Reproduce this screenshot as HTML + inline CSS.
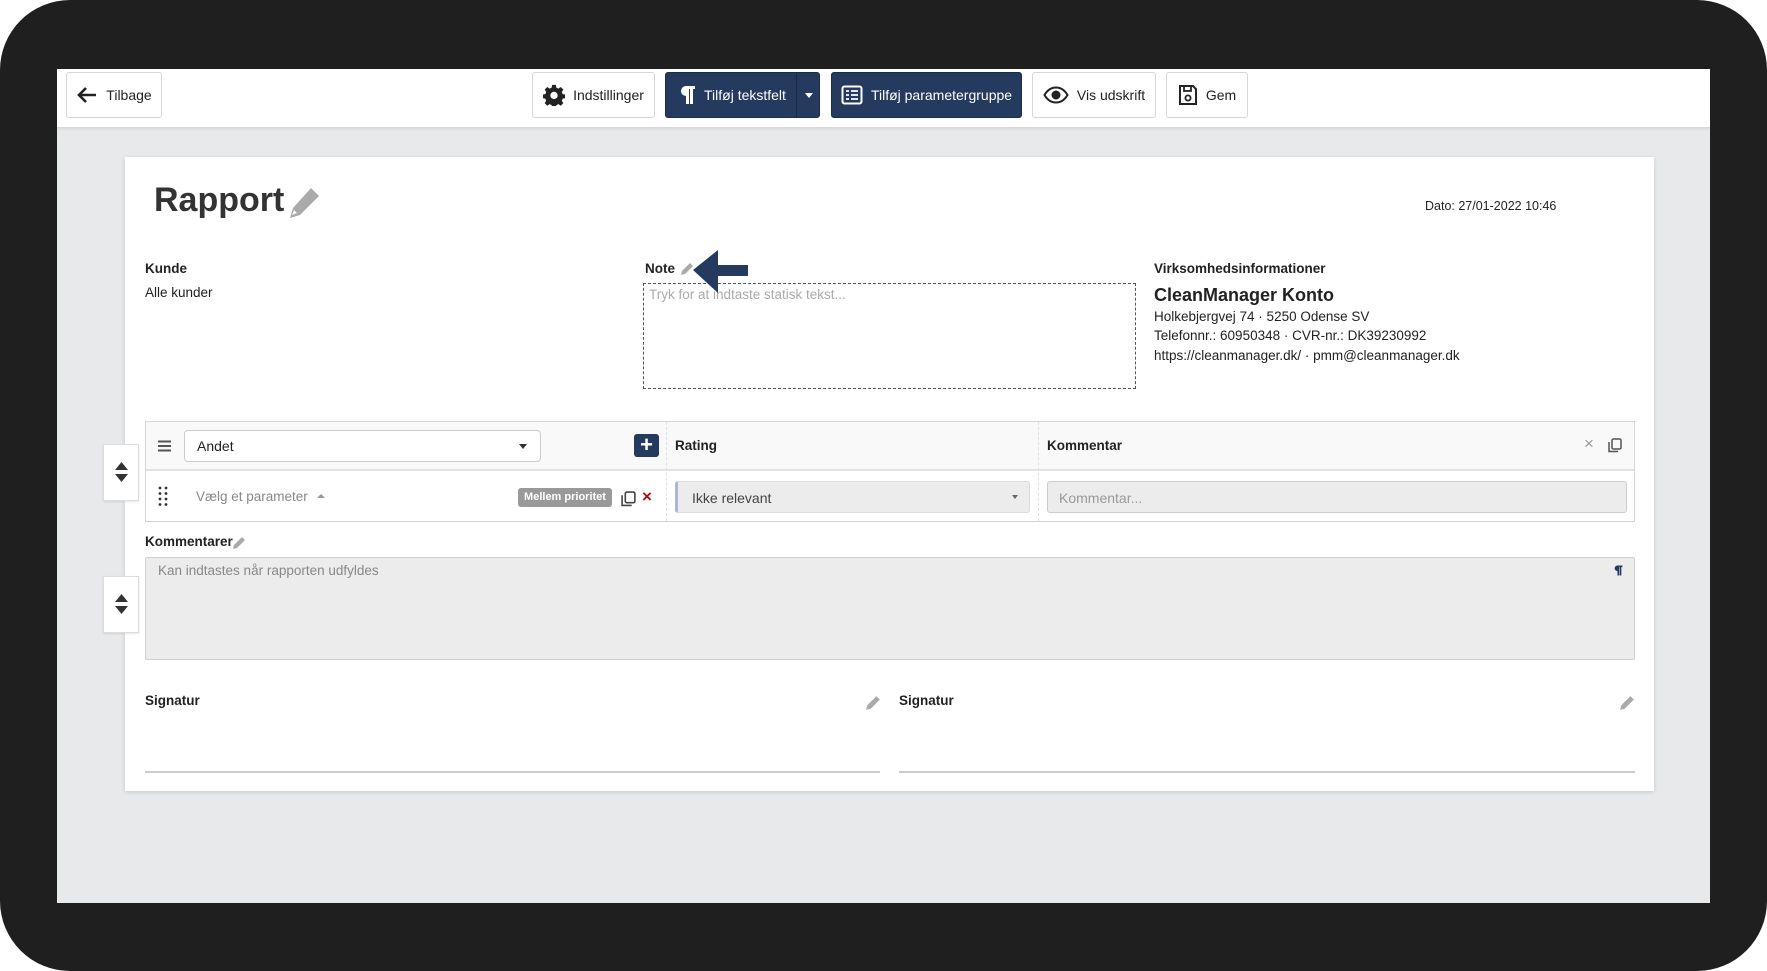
<!DOCTYPE html>
<html><head><meta charset="utf-8"><style>
*{box-sizing:border-box;margin:0;padding:0}
body{width:1767px;height:971px;background:#fff;font-family:"Liberation Sans",sans-serif;color:#222;position:relative;overflow:hidden}
.frame{position:absolute;left:0;top:0;width:1767px;height:971px;background:#1f1f1f;border-radius:70px}
.screen{position:absolute;left:57px;top:69px;width:1653px;height:834px;background:#e8e9eb;overflow:hidden}
.tb{position:absolute;left:0;top:0;width:1653px;height:59px;background:#fff;border-bottom:1px solid #d8d8d8;box-shadow:0 1px 3px rgba(0,0,0,.08)}
.a{position:absolute}
.btn{position:absolute;top:3px;height:46px;border:1px solid #d6d6d6;border-radius:3px;background:#fff;font-size:14px;display:flex;align-items:center;justify-content:center;gap:8px;color:#222}
.btn.d{background:#243a5e;border-color:#1b2d4a;color:#fff}
.card{position:absolute;left:68px;top:88px;width:1529px;height:634px;background:#fff;box-shadow:0 1px 4px rgba(0,0,0,.15)}
.lbl{font-weight:bold;font-size:13.5px}
.t{font-size:13.5px}
</style></head><body>
<div class="frame"></div>
<div class="screen">
 <div class="tb">
  <div class="btn" style="left:9px;width:96px"><svg width="22" height="18" viewBox="0 0 22 18"><path d="M10 2 3 9l7 7M3 9h17" stroke="#222" stroke-width="2.6" fill="none"/></svg>Tilbage</div>
  <div class="btn" style="left:475px;width:123px"><svg width="22" height="22" viewBox="0 0 24 24"><path fill="#222" d="M10 1h4l.6 3 2.2 1 2.6-1.7 2.8 2.8L20.5 8.7l1 2.3 2.5.5v4l-2.5.5-1 2.3 1.7 2.6-2.8 2.8-2.6-1.7-2.2 1-.6 2.5h-4l-.6-2.5-2.2-1-2.6 1.7-2.8-2.8 1.7-2.6-1-2.3L0 15.5v-4L2.5 11l1-2.3L1.8 6.1 4.6 3.3 7.2 5l2.2-1zM12 8.5a4 4 0 1 0 0 8 4 4 0 0 0 0-8z"/></svg>Indstillinger</div>
  <div class="btn d" style="left:608px;width:155px;justify-content:flex-start;padding-left:12px"><svg width="18" height="20" viewBox="0 0 18 20"><path fill="#fff" d="M8 1h9v3h-2v15h-3V4h-1v15H8v-8a5 5 0 0 1 0-10z"/></svg>Tilføj tekstfelt<div class="a" style="left:130px;top:0;width:1px;height:44px;background:#1a2a45"></div><div class="a" style="left:139px;top:20px;border:4px solid transparent;border-top:5px solid #fff"></div></div>
  <div class="btn d" style="left:774px;width:191px"><svg width="22" height="20" viewBox="0 0 22 20"><rect x="1.5" y="1.5" width="19" height="17" rx="2" fill="none" stroke="#fff" stroke-width="2"/><path d="M5 6h3M10 6h7M5 10h3M10 10h7M5 14h3M10 14h7" stroke="#fff" stroke-width="1.8"/></svg>Tilføj parametergruppe</div>
  <div class="btn" style="left:975px;width:124px"><svg width="26" height="18" viewBox="0 0 26 18"><path d="M1.5 9C5 3 9 1.5 13 1.5S21 3 24.5 9C21 15 17 16.5 13 16.5S5 15 1.5 9z" fill="none" stroke="#222" stroke-width="2"/><circle cx="13" cy="9" r="4.5" fill="#222"/></svg>Vis udskrift</div>
  <div class="btn" style="left:1109px;width:82px"><svg width="20" height="22" viewBox="0 0 20 22"><path d="M2 2h13l3 3v15H2z" fill="none" stroke="#222" stroke-width="2"/><path d="M6 2v5h7V2" fill="none" stroke="#222" stroke-width="1.8"/><circle cx="10" cy="14" r="2.6" fill="none" stroke="#222" stroke-width="1.8"/></svg>Gem</div>
 </div>
 <div class="card">
  <div class="a" style="left:29px;top:24px;font-size:34px;font-weight:bold;color:#333">Rapport</div>
  <svg class="a" style="left:162px;top:29px" width="34" height="34" viewBox="0 0 34 34"><path fill="#aaa" d="M24 2l8 8-19 19-10 3 3-10zM7 24l-2 5 5-2z"/></svg>
  <div class="a t" style="left:1300px;top:42px;font-size:12.5px">Dato: 27/01-2022 10:46</div>
  <div class="a lbl" style="left:20px;top:104px">Kunde</div>
  <div class="a t" style="left:20px;top:128px">Alle kunder</div>
  <div class="a lbl" style="left:520px;top:104px">Note</div>
  <svg class="a" style="left:555px;top:105px" width="14" height="14" viewBox="0 0 14 14"><path fill="#aaa" d="M10 1l3 3-8 8-4 1 1-4z"/></svg>
  <div class="a" style="left:518px;top:126px;width:493px;height:106px;border:1px dashed #555"></div>
  <div class="a t" style="left:524px;top:130px;color:#aaa">Tryk for at indtaste statisk tekst...</div>
  <svg class="a" style="left:568px;top:93px" width="56" height="44" viewBox="0 0 56 44"><path fill="#243a5e" d="M0 20 25 0v15h30v11H25v17z"/></svg>
  <div class="a lbl" style="left:1029px;top:104px">Virksomhedsinformationer</div>
  <div class="a" style="left:1029px;top:128px;font-size:18px;font-weight:bold">CleanManager Konto</div>
  <div class="a t" style="left:1029px;top:150px;line-height:19.3px">Holkebjergvej 74 · 5250 Odense SV<br>Telefonnr.: 60950348 · CVR-nr.: DK39230992<br>https://cleanmanager.dk/ · pmm@cleanmanager.dk</div>

  <div class="a" style="left:20px;top:264px;width:1490px;height:101px;border:1px solid #d4d4d4"></div>
  <div class="a" style="left:21px;top:265px;width:1488px;height:49px;background:#f9f9f9;border-bottom:2px solid #e2e2e2"></div>
  <div class="a" style="left:541px;top:265px;width:1px;height:99px;border-left:1px dashed #e0e0e0"></div>
  <div class="a" style="left:913px;top:265px;width:1px;height:99px;border-left:1px dashed #e0e0e0"></div>
  <svg class="a" style="left:33px;top:283px" width="13" height="12" viewBox="0 0 13 12"><path d="M0 1.5h13M0 6h13M0 10.5h13" stroke="#555" stroke-width="2"/></svg>
  <div class="a" style="left:59px;top:273px;width:357px;height:32px;border:1px solid #ccc;border-radius:4px;background:#fff;font-size:14px;padding:7px 12px">Andet</div>
  <div class="a" style="left:394px;top:287px;border:4px solid transparent;border-top:5px solid #333"></div>
  <div class="a" style="left:509px;top:277px;width:25px;height:23px;background:#243a5e;border-radius:3px;color:#fff;font-size:22px;font-weight:bold;text-align:center;line-height:22px">+</div>
  <div class="a lbl" style="left:550px;top:281px">Rating</div>
  <div class="a lbl" style="left:922px;top:281px">Kommentar</div>
  <div class="a" style="left:1459px;top:277px;color:#999;font-size:17px">×</div>
  <svg class="a" style="left:1483px;top:281px" width="14" height="15" viewBox="0 0 14 15"><rect x="4" y="1" width="9" height="10" rx="1.5" fill="none" stroke="#555" stroke-width="1.5"/><path d="M1 4v9.5h9" fill="none" stroke="#555" stroke-width="1.5"/></svg>

  <svg class="a" style="left:33px;top:329px" width="10" height="20" viewBox="0 0 10 20"><g fill="#333"><circle cx="2" cy="2" r="1.4"/><circle cx="8" cy="2" r="1.4"/><circle cx="2" cy="7.5" r="1.4"/><circle cx="8" cy="7.5" r="1.4"/><circle cx="2" cy="13" r="1.4"/><circle cx="8" cy="13" r="1.4"/><circle cx="2" cy="18.5" r="1.4"/><circle cx="8" cy="18.5" r="1.4"/></g></svg>
  <div class="a t" style="left:71px;top:332px;color:#888">Vælg et parameter</div>
  <div class="a" style="left:192px;top:337px;border:4px solid transparent;border-bottom:4px solid #999;border-top:0"></div>
  <div class="a" style="left:393px;top:331px;width:94px;height:19px;background:#999;border-radius:3px;color:#fff;font-size:11px;font-weight:bold;text-align:center;line-height:18px">Mellem prioritet</div>
  <svg class="a" style="left:496px;top:334px" width="15" height="16" viewBox="0 0 14 15"><rect x="4" y="1" width="9" height="10" rx="1.5" fill="none" stroke="#444" stroke-width="1.5"/><path d="M1 4v9.5h9" fill="none" stroke="#444" stroke-width="1.5"/></svg>
  <div class="a" style="left:517px;top:330px;color:#a01010;font-size:17px;font-weight:bold">×</div>
  <div class="a" style="left:550px;top:324px;width:355px;height:32px;background:#ececec;border:1px solid #ddd;border-left:3px solid #a8b8d8;border-radius:3px;font-size:14px;padding:8px 14px;color:#444">Ikke relevant</div>
  <div class="a" style="left:887px;top:338px;border:3.5px solid transparent;border-top:4px solid #666"></div>
  <div class="a" style="left:922px;top:324px;width:580px;height:32px;background:#ececec;border:1px solid #ccc;border-radius:3px;font-size:14px;padding:8px 11px;color:#999">Kommentar...</div>

  <div class="a lbl" style="left:20px;top:377px">Kommentarer</div>
  <svg class="a" style="left:107px;top:379px" width="14" height="14" viewBox="0 0 14 14"><path fill="#aaa" d="M10 1l3 3-8 8-4 1 1-4z"/></svg>
  <div class="a" style="left:20px;top:400px;width:1490px;height:103px;background:#ececec;border:1px solid #d0d0d0;border-radius:2px"></div>
  <div class="a t" style="left:33px;top:406px;color:#888">Kan indtastes når rapporten udfyldes</div>
  <svg class="a" style="left:1488px;top:407px" width="10" height="13" viewBox="0 0 18 20"><path fill="#243a5e" d="M8 1h9v3h-2v15h-3V4h-1v15H8v-8a5 5 0 0 1 0-10z"/></svg>

  <div class="a lbl" style="left:20px;top:536px">Signatur</div>
  <svg class="a" style="left:740px;top:538px" width="16" height="16" viewBox="0 0 14 14"><path fill="#aaa" d="M10 1l3 3-8 8-4 1 1-4z"/></svg>
  <div class="a" style="left:20px;top:614px;width:735px;height:2px;background:#ccc"></div>
  <div class="a lbl" style="left:774px;top:536px">Signatur</div>
  <svg class="a" style="left:1494px;top:538px" width="16" height="16" viewBox="0 0 14 14"><path fill="#aaa" d="M10 1l3 3-8 8-4 1 1-4z"/></svg>
  <div class="a" style="left:774px;top:614px;width:736px;height:2px;background:#ccc"></div>
 </div>
 <div class="a" style="left:46px;top:375px;width:36px;height:57px;background:#fff;border:1px solid #ddd;box-shadow:0 1px 2px rgba(0,0,0,.1)"><svg style="margin:16px 0 0 10px" width="15" height="22" viewBox="0 0 15 22"><path d="M7.5 1 14 9H1zM7.5 21 14 13H1z" fill="#333"/></svg></div>
 <div class="a" style="left:46px;top:507px;width:36px;height:57px;background:#fff;border:1px solid #ddd;box-shadow:0 1px 2px rgba(0,0,0,.1)"><svg style="margin:16px 0 0 10px" width="15" height="22" viewBox="0 0 15 22"><path d="M7.5 1 14 9H1zM7.5 21 14 13H1z" fill="#333"/></svg></div>
</div>
</body></html>
